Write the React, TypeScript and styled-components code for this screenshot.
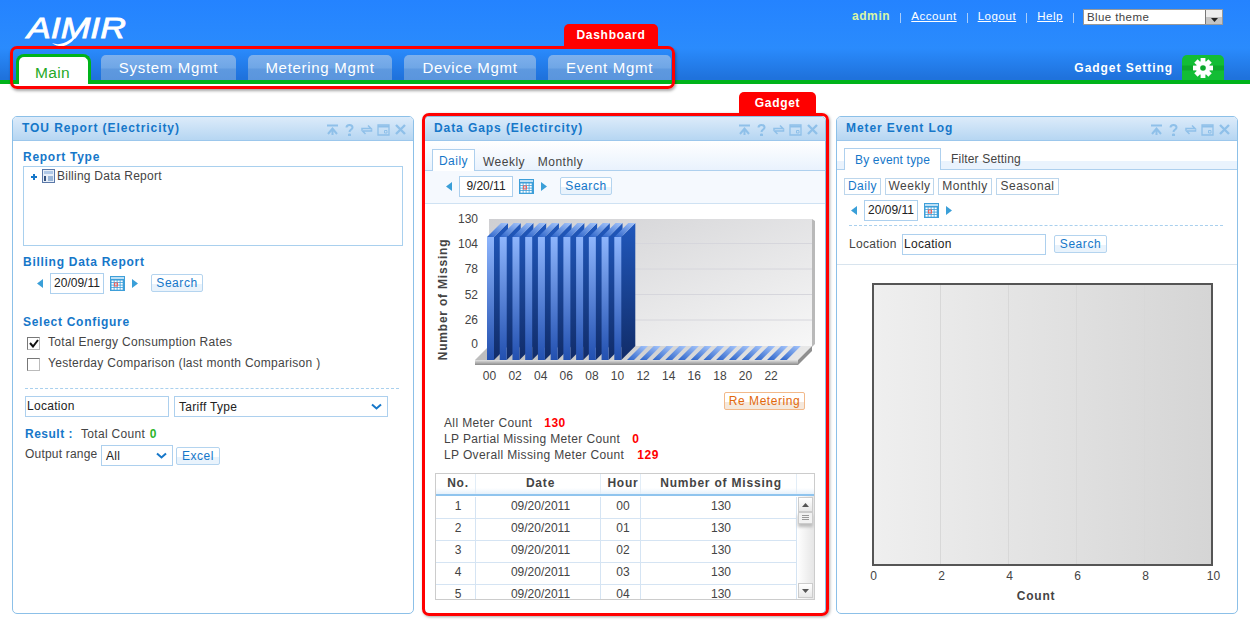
import React from 'react';
import styled, { createGlobalStyle } from 'styled-components';

const GlobalStyle = createGlobalStyle`
  html, body { margin: 0; padding: 0; background: #fff; }
  body {
    font-family: "Liberation Sans", Arial, sans-serif;
    font-size: 12px;
    color: #444;
    overflow: hidden;
  }
  * { box-sizing: border-box; }
`;

const Page = styled.div`
  width: 1250px;
  height: 627px;
  overflow: hidden;
`;

const Header = styled.header`
  position: relative;
  height: 84px;
  border-bottom: 4px solid #00b31a;
  background: linear-gradient(#2483ff 0, #2a8bfd 48px, #1f72dc 78px);
`;

const HeaderTop = styled.div`
  display: flex;
  justify-content: space-between;
  height: 55px;
`;

const Utility = styled.div`
  display: flex;
  align-items: center;
  height: 16px;
  margin: 9px 27px 0 0;
  color: #fff;
  letter-spacing: 0.55px;
`;

const UserName = styled.b`
  margin-top: -2px;
  color: #d9f7a6;
  letter-spacing: 0.6px;
`;

const UtilLink = styled.a`
  margin-top: -2px;
  color: #fff;
  text-decoration: underline;
  font-size: 11.5px;
`;

const Sep = styled.i`
  width: 1px;
  height: 10px;
  margin: 2px 10px 0;
  background: #a9cdfa;
`;

const ThemeSelect = styled.div`
  display: flex;
  align-items: center;
  justify-content: space-between;
  width: 140px;
  height: 16px;
  margin-left: -1px;
  border: 1px solid #999;
  background: #fff;
  color: #444;
  padding-left: 3px;
  font-size: 11.5px;
  letter-spacing: 0.4px;
`;

const ThemeArrow = styled.span`
  display: flex;
  align-items: flex-end;
  justify-content: center;
  width: 17px;
  height: 14px;
  padding-bottom: 2px;
  background: linear-gradient(#eee 50%, #c4c4c4 50%);
  border-left: 1px solid #777;
`;

const NavRow = styled.nav`
  display: flex;
  justify-content: space-between;
  height: 25px;
  padding: 0 26px 0 16px;
`;

const Tabs = styled.div`
  display: flex;
  gap: 12px;
`;

const MainTab = styled.div`
  width: 75px;
  height: 30px;
  margin: -1px -2px 0 0;
  padding-right: 2px;
  border: 3px solid #00b31a;
  border-bottom: 0;
  border-radius: 8px 8px 0 0;
  background: #fff;
  color: #25a926;
  font-size: 15.5px;
  line-height: 32px;
  text-align: center;
  letter-spacing: 0.4px;
`;

const NavTab = styled.div<{ $w: number }>`
  width: ${(p) => p.$w}px;
  height: 25px;
  border-radius: 5px 5px 0 0;
  background: linear-gradient(#7eb0ec 0, #6fa6e6 13px, #5e99df 14px, #5a95dd 25px);
  color: #fff;
  font-size: 15px;
  line-height: 25px;
  text-align: center;
  letter-spacing: 0.7px;
`;

const GadgetSetting = styled.div`
  display: flex;
  align-items: center;
  gap: 9px;
  font-weight: bold;
  color: #fff;
  letter-spacing: 0.95px;
`;

const GearTab = styled.div`
  display: flex;
  align-items: center;
  justify-content: center;
  width: 42px;
  height: 25px;
  border-radius: 5px 5px 0 0;
  background: linear-gradient(#13bd35 0, #13bd35 10px, #0da82b 11px, #0da82b 15px, #13bd35 16px);
`;

const DashboardMark = styled.div`
  position: absolute;
  left: 10px;
  top: 46px;
  width: 665px;
  height: 43px;
  border: 3px solid #f00;
  border-radius: 7px;
  box-shadow: 1px 2px 3px rgba(0, 0, 0, 0.35);
`;

const MarkTag = styled.div<{ $right: number; $w: number; $h: number }>`
  position: absolute;
  right: ${(p) => p.$right}px;
  bottom: calc(100% + 3px);
  width: ${(p) => p.$w}px;
  height: ${(p) => p.$h}px;
  border-radius: 5px 5px 0 0;
  background: #f00;
  color: #fff;
  font-weight: bold;
  line-height: 22px;
  text-align: center;
  letter-spacing: 0.7px;
`;

const Board = styled.main`
  display: grid;
  grid-template-columns: 402px 402px 402px;
  column-gap: 10px;
  padding: 32px 12px 0;
`;

const GadgetSlot = styled.div`
  position: relative;
`;

const GadgetMark = styled.div`
  position: absolute;
  left: -2px;
  top: -3px;
  width: 407px;
  height: 503px;
  border: 3px solid #f00;
  border-radius: 7px;
  box-shadow: 1px 1px 3px rgba(0, 0, 0, 0.35);
  pointer-events: none;
`;

const Panel = styled.section`
  height: 498px;
  border: 1px solid #8cc0e8;
  border-radius: 5px;
  background: #fff;
  overflow: hidden;
`;

const PanelTitle = styled.div`
  display: flex;
  align-items: center;
  justify-content: space-between;
  height: 24px;
  padding: 0 6px 2px 9px;
  background: linear-gradient(#dcebfa, #b6d6f2);
  border-bottom: 1px solid #9cc7ec;
  color: #1677c9;
  font-weight: bold;
  letter-spacing: 0.92px;
`;

const TitleIcons = styled.div`
  display: flex;
  align-items: center;
  gap: 4px;
  margin-top: 3px;
`;

const LeftBody = styled.div`
  padding: 0 10px;
`;

const SectionTitle = styled.div<{ $top: number }>`
  height: 14px;
  margin-top: ${(p) => p.$top}px;
  color: #1677c9;
  font-weight: bold;
  line-height: 16px;
  letter-spacing: 0.72px;
`;

const TreeBox = styled.div`
  display: flex;
  align-items: flex-start;
  gap: 2px;
  width: 380px;
  height: 80px;
  margin-top: 3px;
  padding: 2px 0 0 7px;
  border: 1px solid #a9d0ee;
  letter-spacing: 0.25px;
`;

const DateRow = styled.div<{ $top: number; $left: number }>`
  display: flex;
  align-items: center;
  height: 21px;
  margin-top: ${(p) => p.$top}px;
  padding-left: ${(p) => p.$left}px;
`;

const DateInput = styled.div`
  width: 54px;
  height: 21px;
  margin: 0 6px 0 7px;
  border: 1px solid #add0ee;
  background: #fff;
  color: #222;
  line-height: 19px;
  text-align: center;
`;

const NextArrow = styled.svg`
  margin-left: 7px;
`;

const SoftButton = styled.div<{ $w: number; $left?: number; $y?: number; $warn?: boolean }>`
  align-self: flex-start;
  width: ${(p) => p.$w}px;
  height: 18px;
  margin-top: ${(p) => p.$y ?? 1}px;
  margin-left: ${(p) => p.$left || 0}px;
  border: 1px solid ${(p) => (p.$warn ? '#f2b98a' : '#b4d4ef')};
  border-radius: 2px;
  background: linear-gradient(#fff 55%, ${(p) => (p.$warn ? '#f5e8dc' : '#e9f3fc')} 55%);
  color: ${(p) => (p.$warn ? '#e2680c' : '#1677c9')};
  line-height: 16px;
  text-align: center;
  letter-spacing: 0.55px;
`;

const CheckRow = styled.label<{ $top?: number }>`
  display: flex;
  align-items: center;
  gap: 8px;
  height: 21px;
  margin-top: ${(p) => p.$top || 0}px;
  padding-left: 4px;
  letter-spacing: 0.3px;
`;

const CheckBox = styled.span`
  display: flex;
  align-items: center;
  justify-content: center;
  width: 13px;
  height: 13px;
  margin-top: 3px;
  border: 1px solid #bbb;
  border-top-color: #777;
  border-left-color: #777;
  background: #fff;
`;

const Dashed = styled.div<{ $top: number; $w: number; $left: number }>`
  width: ${(p) => p.$w}px;
  margin: ${(p) => p.$top}px 0 0 ${(p) => p.$left}px;
  border-top: 1px dashed #a9d0ee;
`;

const FieldRow = styled.div`
  display: flex;
  gap: 5px;
  margin: 7px 0 0 2px;
`;

const TextField = styled.div<{ $w: number }>`
  width: ${(p) => p.$w}px;
  height: 21px;
  padding-left: 1px;
  border: 1px solid #add0ee;
  background: #fff;
  color: #222;
  line-height: 19px;
  letter-spacing: 0.3px;
`;

const SelectField = styled.div<{ $w: number }>`
  display: flex;
  align-items: center;
  justify-content: space-between;
  width: ${(p) => p.$w}px;
  height: 21px;
  padding: 0 5px 0 4px;
  border: 1px solid #add0ee;
  background: #fff;
  color: #222;
  letter-spacing: 0.3px;
`;

const ResultRow = styled.div`
  height: 14px;
  margin: 10px 0 0 2px;
  line-height: 14px;
  letter-spacing: 0.3px;
`;

const ResultLabel = styled.b`
  margin-right: 8px;
  color: #1677c9;
  letter-spacing: 0.5px;
`;

const Zero = styled.b`
  margin-left: 1px;
  color: #2cb52c;
`;

const OutputRow = styled.div`
  display: flex;
  align-items: center;
  height: 21px;
  margin: 4px 0 0 2px;
  letter-spacing: 0.2px;
`;

const OutputLabel = styled.span`
  width: 76px;
  margin-top: -3px;
`;

const TabStrip = styled.div<{ $top: number; $band?: boolean }>`
  display: flex;
  align-items: flex-end;
  height: ${(p) => p.$top + 21}px;
  padding-left: 7px;
  border-bottom: 1px solid #aed0ee;
  background: ${(p) =>
    p.$band
      ? 'linear-gradient(#fff 20px, #eaf3fd 20px)'
      : 'linear-gradient(#fff, #e9f2fd)'};
`;

const StripTab = styled.div<{ $active?: boolean; $w: number; $tight?: boolean; $line?: number }>`
  width: ${(p) => p.$w}px;
  height: ${(p) => (p.$active ? '22px' : '20px')};
  margin-bottom: ${(p) => (p.$active ? '-1px' : '0')};
  border: 1px solid ${(p) => (p.$active ? '#aed0ee' : 'transparent')};
  border-bottom: 0;
  background: ${(p) => (p.$active ? '#fff' : 'transparent')};
  color: ${(p) => (p.$active ? '#1677c9' : '#444')};
  line-height: ${(p) => p.$line ?? 22}px;
  text-align: center;
  letter-spacing: ${(p) => (p.$tight ? '0.18px' : '0.5px')};
`;

const DataToolbar = styled.div`
  height: 33px;
  padding-top: 5px;
  background: #f5f9fe;
  border-bottom: 1px solid #cfe2f3;
`;

const ChartSvg = styled.svg`
  display: block;
`;

const ChartBlock = styled.div`
  height: 187px;
`;

const ActionRow = styled.div`
  display: flex;
  justify-content: flex-end;
  padding-right: 20px;
`;

const Stats = styled.div`
  margin: 5px 0 0 19px;
  letter-spacing: 0.37px;
`;

const StatLine = styled.div`
  height: 16px;
  line-height: 16px;
`;

const StatValue = styled.b<{ $gap: number }>`
  margin-left: ${(p) => p.$gap}px;
  color: #f00;
  letter-spacing: 0.5px;
`;

const DataTable = styled.div`
  width: 380px;
  height: 127px;
  margin: 10px 0 0 10px;
  border: 1px solid #ccc;
  overflow: hidden;
`;

const TableHead = styled.div`
  display: grid;
  grid-template-columns: 40px 125px 40px 156px 17px;
  height: 22px;
  border-bottom: 2px solid #8fc4ee;
  background: linear-gradient(#fff 70%, #e6f1fb);
  color: #444;
  font-weight: bold;
  letter-spacing: 0.8px;
  line-height: 19px;
  text-align: center;
`;

const HeadCell = styled.div`
  padding-left: 5px;
  border-right: 1px solid #e2edf7;
  white-space: nowrap;
`;

const TableBody = styled.div`
  display: flex;
  height: 103px;
`;

const Rows = styled.div`
  width: 361px;
  padding-top: 1px;
`;

const Row = styled.div`
  display: grid;
  grid-template-columns: 40px 125px 40px 156px;
  height: 22px;
  border-bottom: 1px solid #d5e4f3;
  line-height: 19px;
  text-align: center;
`;

const Cell = styled.div`
  padding-left: 5px;
  border-right: 1px solid #d5e4f3;
`;

const ScrollBar = styled.div`
  display: flex;
  flex-direction: column;
  align-items: center;
  width: 17px;
  padding: 1px 0;
  background: linear-gradient(90deg, #fff, #e6e6e6);
`;

const ScrollButton = styled.div`
  display: flex;
  align-items: center;
  justify-content: center;
  width: 15px;
  height: 15px;
  border: 1px solid #ccc;
  background: linear-gradient(#fff, #e8e8e8);
`;

const ScrollThumb = styled.div`
  display: flex;
  align-items: center;
  justify-content: center;
  width: 15px;
  height: 12px;
  border: 1px solid #ccc;
  background: #f2f2f2;
  box-shadow: 0 3px 3px #bbb;
`;

const ScrollTrack = styled.div`
  flex: 1;
`;

const EventBody = styled.div`
  padding: 0 0 0 7px;
`;

const PeriodRow = styled.div`
  display: flex;
  gap: 4px;
  margin-top: 8px;
`;

const PeriodButton = styled.div<{ $w: number; $active?: boolean }>`
  width: ${(p) => p.$w}px;
  height: 17px;
  border: 1px solid #bcd6ec;
  color: ${(p) => (p.$active ? '#1677c9' : '#444')};
  line-height: 15px;
  text-align: center;
  letter-spacing: 0.5px;
`;

const LocationRow = styled.div`
  display: flex;
  align-items: center;
  height: 21px;
  margin: 8px 0 0 5px;
  letter-spacing: 0.3px;
`;

const LocationLabel = styled.span`
  width: 53px;
  margin-top: -1px;
`;

const SectionRule = styled.div`
  margin-top: 9px;
  border-top: 1px solid #d8e4ee;
`;

const chartFont = '"Liberation Sans", Arial, sans-serif';

const IconProps = { width: 13, height: 13, viewBox: '0 0 13 13', fill: 'none', stroke: '#8fc0e9', strokeWidth: 2 };

const PanelIcons = () => (
  <TitleIcons>
    <svg {...IconProps}><path d="M1 2.5h11M2 11l4.5-5.5L11 11M6.5 6v6" /></svg>
    <svg {...IconProps}><path d="M3.5 4.5C3.5 1 9.5 1 9.5 4.5 9.5 6.5 6.5 6.5 6.5 9" /><path d="M5.5 11h2v2h-2z" strokeWidth="1" fill="#8fc0e9" /></svg>
    <svg {...IconProps} strokeWidth={1.5}><path d="M2 7V5.5h9L8 2.5M11.5 6.5V8h-9l3 3" /></svg>
    <svg {...IconProps} strokeWidth={1.3}><path d="M1 2h11v10H1z" /><path d="M1 3.6h11" strokeWidth="2" /><path d="M7.5 7.5h2.5v2.5H7.5z" strokeWidth="1" /></svg>
    <svg {...IconProps} strokeWidth={2.4}><path d="M2 2l9 9M11 2l-9 9" /></svg>
  </TitleIcons>
);

const Prev = () => (
  <svg width="6" height="9" viewBox="0 0 6 9"><path d="M6 0v9L0 4.5z" fill="#3a9fd8" /></svg>
);

const Next = () => (
  <NextArrow width="6" height="9" viewBox="0 0 6 9"><path d="M0 0v9l6-4.5z" fill="#3a9fd8" /></NextArrow>
);

const Calendar = () => (
  <svg width="15" height="15" viewBox="0 0 15 15">
    <rect width="15" height="15" fill="#3e9fd9" />
    <rect x="1" y="1" width="13" height="2" fill="#bfe0f5" />
    {[0, 1, 2, 3].map((r) =>
      [0, 1, 2, 3].map((c) => (
        <rect key={`${r}-${c}`} x={1.5 + c * 3} y={4.5 + r * 2.5} width="2.2" height="1.7" fill="#fff" />
      )),
    )}
    <rect x="4.5" y="7" width="3" height="3" fill="none" stroke="#f0605a" />
  </svg>
);

const Chevron = () => (
  <svg width="11" height="7" viewBox="0 0 11 7" fill="none"><path d="M1 1.5l4.5 4 4.5-4" stroke="#1677c9" strokeWidth="2" /></svg>
);

const DateControl = ({ value }: { value: string }) => (
  <>
    <Prev />
    <DateInput>{value}</DateInput>
    <Calendar />
    <Next />
  </>
);

const Gear = () => (
  <svg width="22" height="22" viewBox="0 0 22 22">
    {[0, 45, 90, 135, 180, 225, 270, 315].map((a) => (
      <rect key={a} x="8.6" y="1" width="4.8" height="6" fill="#fff" transform={`rotate(${a} 11 11)`} />
    ))}
    <circle cx="11" cy="11" r="7" fill="#fff" />
    <circle cx="11" cy="11" r="2.8" fill="#0da82b" />
  </svg>
);

const Logo = () => (
  <svg width="140" height="52" viewBox="0 0 140 52">
    <text x="27" y="38" fontFamily={chartFont} fontStyle="italic" fontSize="29" fill="#fff" stroke="#fff" strokeWidth="0.8" textLength="99" lengthAdjust="spacingAndGlyphs">AIMIR</text>
    <path d="M52 43c10 4 20-3 28-13-6 13-17 21-28 13z" fill="#fff" />
  </svg>
);

const barX = (i: number) => 487 + 12.73 * i;

// back wall, floor, bars of the gaps chart; coordinates are page coordinates, the viewBox offsets them
const GapsChart = () => {
  const tall = Array.from({ length: 11 }, (_, i) => i);
  const flat = Array.from({ length: 13 }, (_, i) => i + 11);
  const ox = 425;
  const oy = 204;
  return (
    <ChartSvg width="400" height="187" viewBox={`${ox} ${oy} 400 187`}>
      <defs>
        <linearGradient id="wall" x1="0" y1="0" x2="1" y2="1">
          <stop offset="0" stopColor="#cfcfd2" />
          <stop offset="1" stopColor="#f7f7f7" />
        </linearGradient>
        <linearGradient id="front" x1="0" y1="0" x2="0" y2="1">
          <stop offset="0" stopColor="#8eb5fc" />
          <stop offset="1" stopColor="#2250b0" />
        </linearGradient>
        <linearGradient id="side" x1="0" y1="0" x2="0" y2="1">
          <stop offset="0" stopColor="#2058bd" />
          <stop offset="1" stopColor="#112c68" />
        </linearGradient>
        <linearGradient id="top" x1="0" y1="1" x2="1" y2="0">
          <stop offset="0" stopColor="#2a62c8" />
          <stop offset="1" stopColor="#a6c6fc" />
        </linearGradient>
        <linearGradient id="edge" x1="0" y1="0" x2="0" y2="1">
          <stop offset="0" stopColor="#e2e2e2" />
          <stop offset="1" stopColor="#8a8a8a" />
        </linearGradient>
        <linearGradient id="floor" x1="0" y1="0" x2="1" y2="0">
          <stop offset="0" stopColor="#bdbdbd" />
          <stop offset="1" stopColor="#e8e8e8" />
        </linearGradient>
      </defs>
      <rect x="489" y="219" width="323" height="127" fill="url(#wall)" />
      <path d="M812 219l3 2v123l-3 3z" fill="#b9b9b9" />
      {[243.5, 269, 294.5, 320].map((y) => (
        <line key={y} x1="489" x2="812" y1={y} y2={y} stroke="#d6d6dc" />
      ))}
      <path d="M475 360l14-14h323l-14 14z" fill="url(#floor)" />
      <rect x="475" y="360" width="323" height="5" fill="url(#edge)" />
      <path d="M798 360v5l14-14v-5z" fill="#8f8f8f" />
      {flat.map((i) => {
        const x = barX(i);
        return <polygon key={i} points={`${x},360 ${x + 14},346 ${x + 21},346 ${x + 7},360`} fill="url(#top)" />;
      })}
      {tall.map((i) => {
        const x = barX(i);
        return (
          <g key={i}>
            <polygon points={`${x + 7},237 ${x + 21},223 ${x + 21},346 ${x + 7},360`} fill="url(#side)" />
            <polygon points={`${x},237 ${x + 14},223 ${x + 21},223 ${x + 7},237`} fill="url(#top)" />
            <rect x={x} y="237" width="7" height="123" fill="url(#front)" />
          </g>
        );
      })}
      <g fontFamily={chartFont} fontSize="12" fill="#444" textAnchor="end">
        {[['130', 223], ['104', 248], ['78', 273], ['52', 299], ['26', 324], ['0', 348]].map(([t, y]) => (
          <text key={t} x="478" y={y}>{t}</text>
        ))}
      </g>
      <g fontFamily={chartFont} fontSize="12" fill="#444" textAnchor="middle">
        {['00', '02', '04', '06', '08', '10', '12', '14', '16', '18', '20', '22'].map((t, i) => (
          <text key={t} x={489.5 + 25.6 * i} y="380">{t}</text>
        ))}
      </g>
      <text transform="translate(447 299.5) rotate(-90)" fontFamily={chartFont} fontSize="12" fontWeight="bold" fill="#444" textAnchor="middle" letterSpacing="0.8">Number of Missing</text>
    </ChartSvg>
  );
};

// frame sits at 872..1213 in page x, 283..566 in page y
const CountChart = () => (
  <ChartSvg width="400" height="349" viewBox="837 265 400 349">
    <defs>
      <linearGradient id="plot" x1="0" y1="0" x2="1" y2="0">
        <stop offset="0" stopColor="#efefef" />
        <stop offset="1" stopColor="#d5d5d5" />
      </linearGradient>
    </defs>
    <rect x="873" y="284" width="339" height="281" fill="url(#plot)" stroke="#555" strokeWidth="2" />
    {[940, 1008, 1076, 1144].map((x) => (
      <line key={x} x1={x + 0.5} x2={x + 0.5} y1="285" y2="564" stroke="#d8d8d8" />
    ))}
    <g fontFamily={chartFont} fontSize="12" fill="#444" textAnchor="middle">
      {['0', '2', '4', '6', '8', '10'].map((t, i) => (
        <text key={t} x={873.5 + 68 * i} y="580">{t}</text>
      ))}
    </g>
    <text x="1036" y="600" fontFamily={chartFont} fontSize="12" fontWeight="bold" fill="#444" textAnchor="middle" letterSpacing="0.8">Count</text>
  </ChartSvg>
);

const rows = ['00', '01', '02', '03', '04'];

const App = () => (
  <Page>
    <GlobalStyle />
    <Header>
      <HeaderTop>
        <Logo />
        <Utility>
          <UserName>admin</UserName>
          <Sep />
          <UtilLink>Account</UtilLink>
          <Sep />
          <UtilLink>Logout</UtilLink>
          <Sep />
          <UtilLink>Help</UtilLink>
          <Sep />
          <ThemeSelect>
            Blue theme
            <ThemeArrow>
              <svg width="7" height="4" viewBox="0 0 7 4"><path d="M0 0h7L3.5 4z" fill="#222" /></svg>
            </ThemeArrow>
          </ThemeSelect>
        </Utility>
      </HeaderTop>
      <NavRow>
        <Tabs>
          <MainTab>Main</MainTab>
          <NavTab $w={135}>System Mgmt</NavTab>
          <NavTab $w={144}>Metering Mgmt</NavTab>
          <NavTab $w={132}>Device Mgmt</NavTab>
          <NavTab $w={123}>Event Mgmt</NavTab>
        </Tabs>
        <GadgetSetting>
          Gadget Setting
          <GearTab><Gear /></GearTab>
        </GadgetSetting>
      </NavRow>
      <DashboardMark>
        <MarkTag $right={14} $w={94} $h={22}>Dashboard</MarkTag>
      </DashboardMark>
    </Header>
    <Board>
      <Panel>
        <PanelTitle>TOU Report (Electricity)<PanelIcons /></PanelTitle>
        <LeftBody>
          <SectionTitle $top={8}>Report Type</SectionTitle>
          <TreeBox>
            <svg width="9" height="14" viewBox="0 0 9 14"><path d="M0 8h6M3 5v6" stroke="#1677c9" strokeWidth="2" /></svg>
            <svg width="13" height="14" viewBox="0 0 13 14">
              <rect x=".5" y=".5" width="12" height="13" fill="#e8eff8" stroke="#5a78a8" />
              <rect x="2" y="2" width="9" height="3" fill="#b0c8e6" />
              <rect x="2" y="7" width="2" height="5" fill="#36527e" />
              <rect x="6" y="7" width="5" height="5" fill="#9ab6d8" />
            </svg>
            Billing Data Report
          </TreeBox>
          <SectionTitle $top={8}>Billing Data Report</SectionTitle>
          <DateRow $top={5} $left={14}>
            <DateControl value="20/09/11" />
            <SoftButton $w={52} $left={13}>Search</SoftButton>
          </DateRow>
          <SectionTitle $top={20}>Select Configure</SectionTitle>
          <CheckRow $top={3}>
            <CheckBox>
              <svg width="10" height="9" viewBox="0 0 10 9" fill="none"><path d="M1 4l3 3.5L9 1" stroke="#111" strokeWidth="2" /></svg>
            </CheckBox>
            Total Energy Consumption Rates
          </CheckRow>
          <CheckRow>
            <CheckBox />
            Yesterday Comparison (last month Comparison )
          </CheckRow>
          <Dashed $top={15} $w={374} $left={2} />
          <FieldRow>
            <TextField $w={144}>Location</TextField>
            <SelectField $w={214}>Tariff Type<Chevron /></SelectField>
          </FieldRow>
          <ResultRow>
            <ResultLabel>Result :</ResultLabel>Total Count <Zero>0</Zero>
          </ResultRow>
          <OutputRow>
            <OutputLabel>Output range</OutputLabel>
            <SelectField $w={72}>All<Chevron /></SelectField>
            <SoftButton $w={44} $left={3} $y={2}>Excel</SoftButton>
          </OutputRow>
        </LeftBody>
      </Panel>

      <GadgetSlot>
        <Panel>
          <PanelTitle>Data Gaps (Electircity)<PanelIcons /></PanelTitle>
          <TabStrip $top={9}>
            <StripTab $active $w={43}>Daily</StripTab>
            <StripTab $w={58}>Weekly</StripTab>
            <StripTab $w={55}>Monthly</StripTab>
          </TabStrip>
          <DataToolbar>
            <DateRow $top={0} $left={21}>
              <DateControl value="9/20/11" />
              <SoftButton $w={52} $left={13}>Search</SoftButton>
            </DateRow>
          </DataToolbar>
          <ChartBlock><GapsChart /></ChartBlock>
          <ActionRow><SoftButton $w={81} $warn>Re Metering</SoftButton></ActionRow>
          <Stats>
            <StatLine>All Meter Count<StatValue $gap={12}>130</StatValue></StatLine>
            <StatLine>LP Partial Missing Meter Count<StatValue $gap={12}>0</StatValue></StatLine>
            <StatLine>LP Overall Missing Meter Count<StatValue $gap={13}>129</StatValue></StatLine>
          </Stats>
          <DataTable>
            <TableHead>
              <HeadCell>No.</HeadCell>
              <HeadCell>Date</HeadCell>
              <HeadCell>Hour</HeadCell>
              <HeadCell>Number of Missing</HeadCell>
              <div />
            </TableHead>
            <TableBody>
              <Rows>
                {rows.map((hour, i) => (
                  <Row key={hour}>
                    <Cell>{i + 1}</Cell>
                    <Cell>09/20/2011</Cell>
                    <Cell>{hour}</Cell>
                    <Cell>130</Cell>
                  </Row>
                ))}
              </Rows>
              <ScrollBar>
                <ScrollButton>
                  <svg width="7" height="4" viewBox="0 0 7 4"><path d="M0 4h7L3.5 0z" fill="#555" /></svg>
                </ScrollButton>
                <ScrollThumb>
                  <svg width="7" height="6" viewBox="0 0 7 6"><path d="M0 .5h7M0 2.5h7M0 4.5h7" stroke="#999" /></svg>
                </ScrollThumb>
                <ScrollTrack />
                <ScrollButton>
                  <svg width="7" height="4" viewBox="0 0 7 4"><path d="M0 0h7L3.5 4z" fill="#555" /></svg>
                </ScrollButton>
              </ScrollBar>
            </TableBody>
          </DataTable>
        </Panel>
        <GadgetMark>
          <MarkTag $right={10} $w={77} $h={21}>Gadget</MarkTag>
        </GadgetMark>
      </GadgetSlot>

      <Panel>
        <PanelTitle>Meter Event Log<PanelIcons /></PanelTitle>
        <TabStrip $top={8} $band>
          <StripTab $active $tight $w={97}>By event type</StripTab>
          <StripTab $tight $line={18} $w={90}>Filter Setting</StripTab>
        </TabStrip>
        <EventBody>
          <PeriodRow>
            <PeriodButton $w={37} $active>Daily</PeriodButton>
            <PeriodButton $w={49}>Weekly</PeriodButton>
            <PeriodButton $w={54}>Monthly</PeriodButton>
            <PeriodButton $w={63}>Seasonal</PeriodButton>
          </PeriodRow>
          <DateRow $top={5} $left={7}>
            <DateControl value="20/09/11" />
          </DateRow>
          <Dashed $top={4} $w={374} $left={5} />
        </EventBody>
        <EventBody>
          <LocationRow>
            <LocationLabel>Location</LocationLabel>
            <TextField $w={144}>Location</TextField>
            <SoftButton $w={53} $left={8}>Search</SoftButton>
          </LocationRow>
        </EventBody>
        <SectionRule />
        <CountChart />
      </Panel>
    </Board>
  </Page>
);

export default App;
